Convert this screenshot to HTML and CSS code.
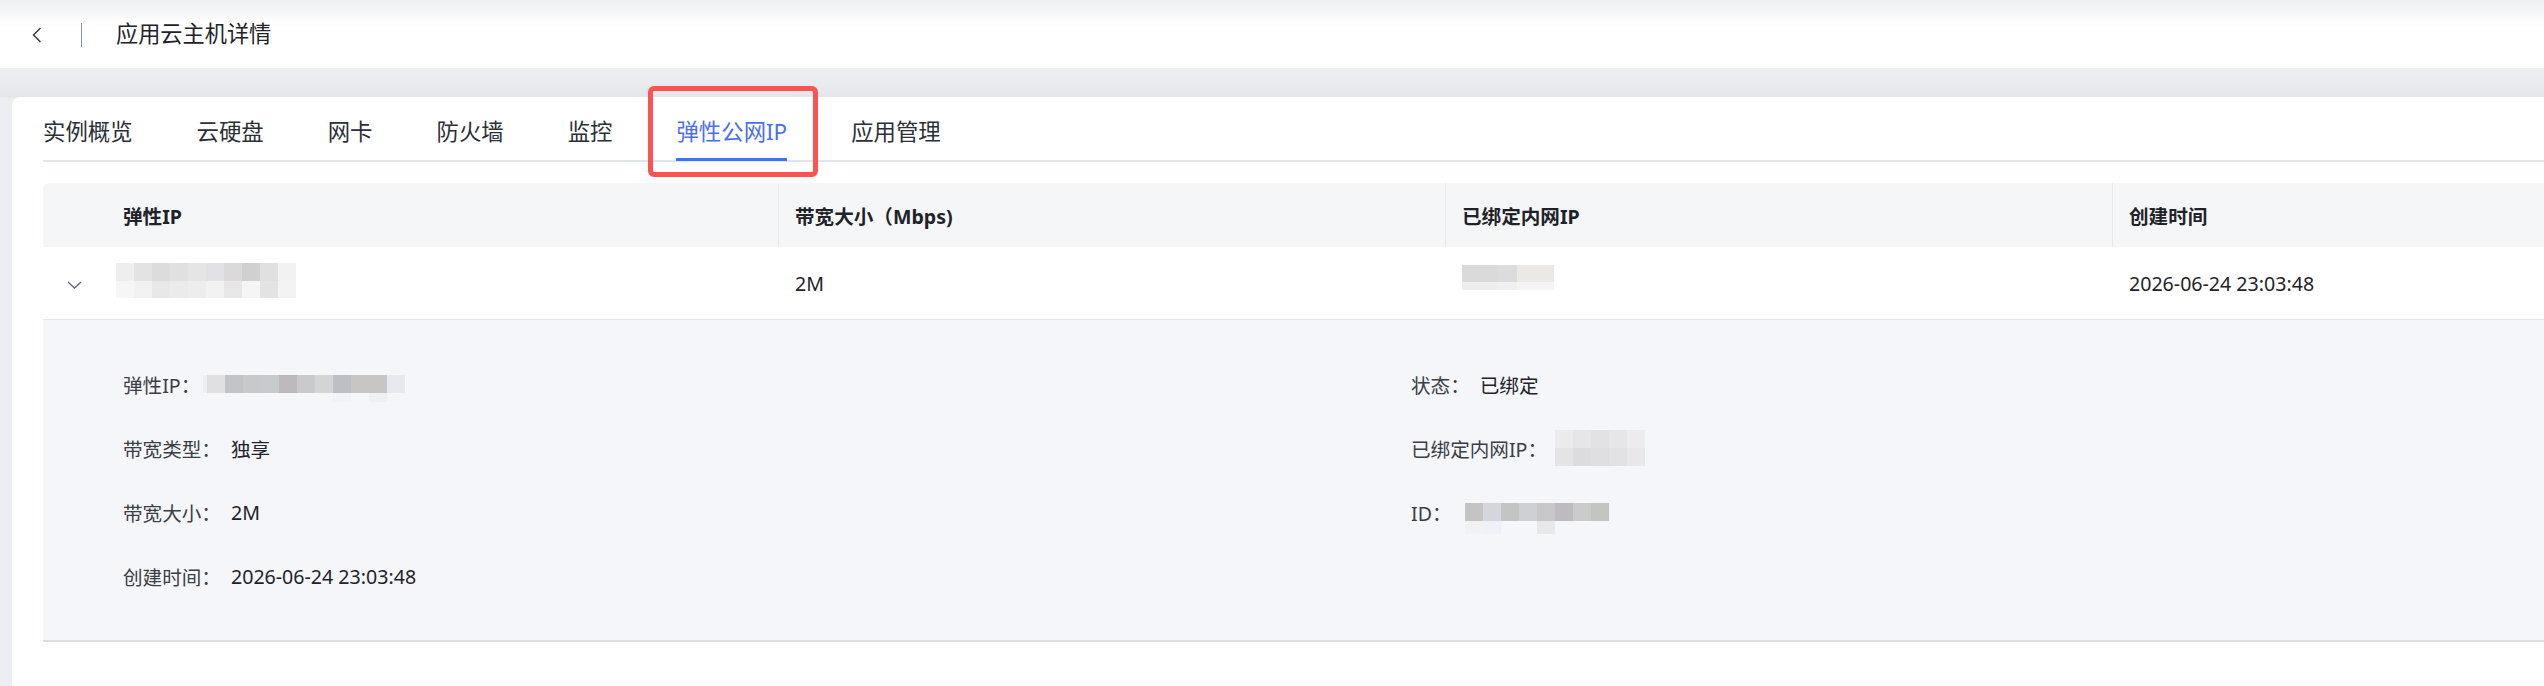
FILE: index.html
```html
<!DOCTYPE html>
<html lang="zh-CN">
<head>
  <meta charset="UTF-8">
  <title>应用云主机详情</title>
  <link rel="stylesheet" href="styles.css">
</head>
<body>
  <!-- 顶部标题栏 -->
  <div class="topbar">
    <button class="back-btn">
      <svg width="10" height="16" viewBox="0 0 10 16"><polyline points="8.5,1 1.5,8 8.5,15" fill="none" stroke="#333" stroke-width="1.4"/></svg>
    </button>
    <span class="topbar-divider"></span>
    <h1 class="page-title">应用云主机详情</h1>
  </div>

  <div class="main">
    <div class="card">
      <!-- 标签页 -->
      <div class="tabs">
        <div class="tab">实例概览</div>
        <div class="tab">云硬盘</div>
        <div class="tab">网卡</div>
        <div class="tab">防火墙</div>
        <div class="tab">监控</div>
        <div class="tab active">弹性公网IP</div>
        <div class="tab">应用管理</div>
      </div>

      <!-- 弹性IP列表 -->
      <div class="eip-table">
        <div class="table-head">
          <div class="th th-first">弹性IP</div>
          <div class="th">带宽大小（Mbps)</div>
          <div class="th">已绑定内网IP</div>
          <div class="th">创建时间</div>
        </div>
        <div class="table-row">
          <div class="td td-first">
            <span class="expand-icon">
              <svg width="15" height="8" viewBox="0 0 15 8"><polyline points="1,1 7.5,7 14,1" fill="none" stroke="#5a6580" stroke-width="1.3"/></svg>
            </span>
            <span class="mosaic mosaic-eip"></span>
          </div>
          <div class="td">2M</div>
          <div class="td"><span class="mosaic mosaic-lan"></span></div>
          <div class="td">2026-06-24 23:03:48</div>
        </div>

        <!-- 展开详情 -->
        <div class="row-detail">
          <div class="detail-col">
            <div class="detail-item">
              <span class="detail-label">弹性IP：</span>
              <span class="mosaic mosaic-detail-eip"></span>
            </div>
            <div class="detail-item">
              <span class="detail-label">带宽类型：</span>
              <span class="detail-value">独享</span>
            </div>
            <div class="detail-item">
              <span class="detail-label">带宽大小：</span>
              <span class="detail-value">2M</span>
            </div>
            <div class="detail-item">
              <span class="detail-label">创建时间：</span>
              <span class="detail-value">2026-06-24 23:03:48</span>
            </div>
          </div>
          <div class="detail-col">
            <div class="detail-item">
              <span class="detail-label">状态：</span>
              <span class="detail-value">已绑定</span>
            </div>
            <div class="detail-item">
              <span class="detail-label">已绑定内网IP：</span>
              <span class="mosaic mosaic-detail-lan"></span>
            </div>
            <div class="detail-item">
              <span class="detail-label">ID：</span>
              <span class="mosaic mosaic-detail-id"></span>
            </div>
          </div>
        </div>
      </div>
    </div>
  </div>
</body>
</html>
```

FILE: styles.css
```css
body {
  margin: 0;
  font-family: "Noto Sans", "Noto Sans CJK SC", sans-serif;
  color: #1f2329;
  background: #eceef2;
  overflow: hidden;
}

/* 顶部栏 */
.topbar {
  height: 68px;
  display: flex;
  align-items: center;
  padding-left: 32px;
  background: linear-gradient(#eeeff2 0, #fafafb 18px, #fff 28px);
}
.back-btn {
  display: flex;
  padding: 0;
  border: none;
  background: none;
  cursor: pointer;
  margin-top: 2px;
}
.topbar-divider {
  width: 1px;
  height: 24px;
  background: #8c93a8;
  margin-left: 39px;
  margin-top: 1px;
}
.page-title {
  margin: 0 0 0 34px;
  font-size: 22.2px;
  font-weight: normal;
  line-height: 30px;
  color: #1f2329;
}

/* 主体 */
.main {
  padding: 29px 0 0 12px;
  background: linear-gradient(#eef0f3 0, #e4e6ea 29px, #eceef2 30px);
}
.card {
  width: 2800px;
  min-height: 600px;
  background: #fff;
  border-radius: 8px 0 0 0;
  padding: 0 31px;
}

/* 标签页 */
.tabs {
  display: flex;
  gap: 64px;
  border-bottom: 2px solid #e2e4ec;
}
.tab {
  position: relative;
  padding: 20px 0 13px;
  font-size: 22.4px;
  line-height: 30px;
  color: #2b2f36;
  cursor: pointer;
}
.tab.active {
  color: #4a6ff2;
}
.tab.active::after {
  content: "";
  position: absolute;
  left: 0;
  right: 0;
  bottom: -1px;
  height: 3px;
  background: #3d74f0;
}
/* 红色标注框 */
.tab.active::before {
  content: "";
  position: absolute;
  left: -28px;
  right: -31px;
  top: -11px;
  bottom: -17px;
  border: 5px solid #fb5252;
  border-radius: 6px;
}

/* 表格 */
.eip-table {
  margin-top: 21px;
  width: 2736px;
  font-size: 19.6px;
}
.table-head,
.table-row {
  display: grid;
  grid-template-columns: 735px 667px 667px 667px;
}
.table-head {
  height: 64px;
  background: #f5f6f8;
  border-radius: 6px 6px 0 0;
}
.th {
  display: flex;
  align-items: center;
  padding-left: 16px;
  font-weight: bold;
  color: #1f2329;
  border-left: 1px solid #e6e8ee;
}
.th-first,
.td-first {
  padding-left: 80px;
  border-left: none;
}
.table-row {
  height: 72px;
  border-bottom: 1px solid #e3e5eb;
}
.td {
  display: flex;
  align-items: center;
  padding-left: 17px;
  color: #1f2329;
}
.td-first {
  position: relative;
  padding-left: 73px;
}
.expand-icon {
  position: absolute;
  left: 24px;
  top: 34px;
  display: flex;
}

/* 展开详情 */
.row-detail {
  display: grid;
  grid-template-columns: 1288px 1288px;
  padding: 32px 80px;
  background: #f5f6fa;
  border-bottom: 2px solid #dcdee3;
}
.detail-item {
  height: 64px;
  display: flex;
  align-items: center;
}
.detail-label {
  color: #3a3e45;
}
.detail-value {
  margin-left: 10px;
  color: #1f2329;
}

/* 打码区域 */
.mosaic {
  display: inline-block;
  flex-shrink: 0;
}
.mosaic-eip {
  width: 198px;
  height: 35px;
  margin-top: -6px;
  background:
    linear-gradient(90deg, #eeeeee 0 18px, #e3e3e6 18px 36px, #dcdcde 36px 54px, #e0e0e0 54px 72px, #e5e5e5 72px 90px, #e2e2e6 90px 108px, #dcd9d9 108px 126px, #d0d0d3 126px 144px, #e0e0e2 144px 162px, #f2f2f2 162px 180px, #fff 180px) top / 100% 18px no-repeat,
    linear-gradient(90deg, #f6f6f6 0 18px, #f2f2f2 18px 36px, #e8e8e8 36px 54px, #ebebeb 54px 72px, #eceeee 72px 90px, #f2f2f2 90px 108px, #e8e6e6 108px 126px, #f4f5f4 126px 144px, #e3e3e3 144px 162px, #f3f3f3 162px 180px, #fff 180px) bottom / 100% 17px no-repeat;
}
.mosaic-lan {
  width: 92px;
  height: 25px;
  margin-top: -12px;
  background:
    linear-gradient(90deg, #dadadd 0 36px, #dcdcdf 36px 55px, #ebe8e5 55px) top / 100% 17px no-repeat,
    linear-gradient(90deg, #eeeeef 0 36px, #f0f0f1 36px 55px, #f5f4f3 55px) bottom / 100% 8px no-repeat;
}
.mosaic-detail-eip {
  width: 202px;
  height: 27px;
  margin: 9px 0 0 3px;
  background:
    linear-gradient(90deg, #f0f0f2 0 4px, #e0e0e2 4px 22px, #c0c4c6 22px 40px, #c9c9cb 40px 58px, #c8cbce 58px 76px, #bdb9ba 76px 94px, #c8cacd 94px 112px, #d4d4d4 112px 130px, #bdbfc6 130px 148px, #c8c5c5 148px 166px, #c8c6c4 166px 184px, #e6e9f0 184px 202px) top / 100% 18px no-repeat,
    linear-gradient(90deg, transparent 0 130px, #f2f3f6 130px 148px, transparent 148px 166px, #eff0f3 166px 184px, transparent 184px) bottom / 100% 9px no-repeat;
}
.mosaic-detail-lan {
  width: 90px;
  height: 36px;
  margin-left: 8px;
  background:
    linear-gradient(90deg, #ebebed 0 18px, #e6e6e8 18px 36px, #e2e2e5 36px 54px, #e6e6e9 54px 72px, #ececee 72px) top / 100% 18px no-repeat,
    linear-gradient(90deg, #e4e4e6 0 18px, #dcdcdf 18px 36px, #dedee1 36px 54px, #e2e2e5 54px 72px, #e8e8ea 72px) bottom / 100% 18px no-repeat;
}
.mosaic-detail-id {
  width: 144px;
  height: 31px;
  margin: 13px 0 0 13px;
  background:
    linear-gradient(90deg, #c4c4c4 0 18px, #d4d6dc 18px 36px, #c3c5c3 36px 54px, #cdd0d4 54px 72px, #c8c7ca 72px 90px, #bdbbc0 90px 108px, #cbcbce 108px 126px, #c2c4c0 126px 144px) top / 100% 18px no-repeat,
    linear-gradient(90deg, #f1f2f4 0 18px, #eef1f7 18px 36px, transparent 36px 72px, #e6e8ea 72px 90px, transparent 90px) bottom / 100% 13px no-repeat;
}
```
